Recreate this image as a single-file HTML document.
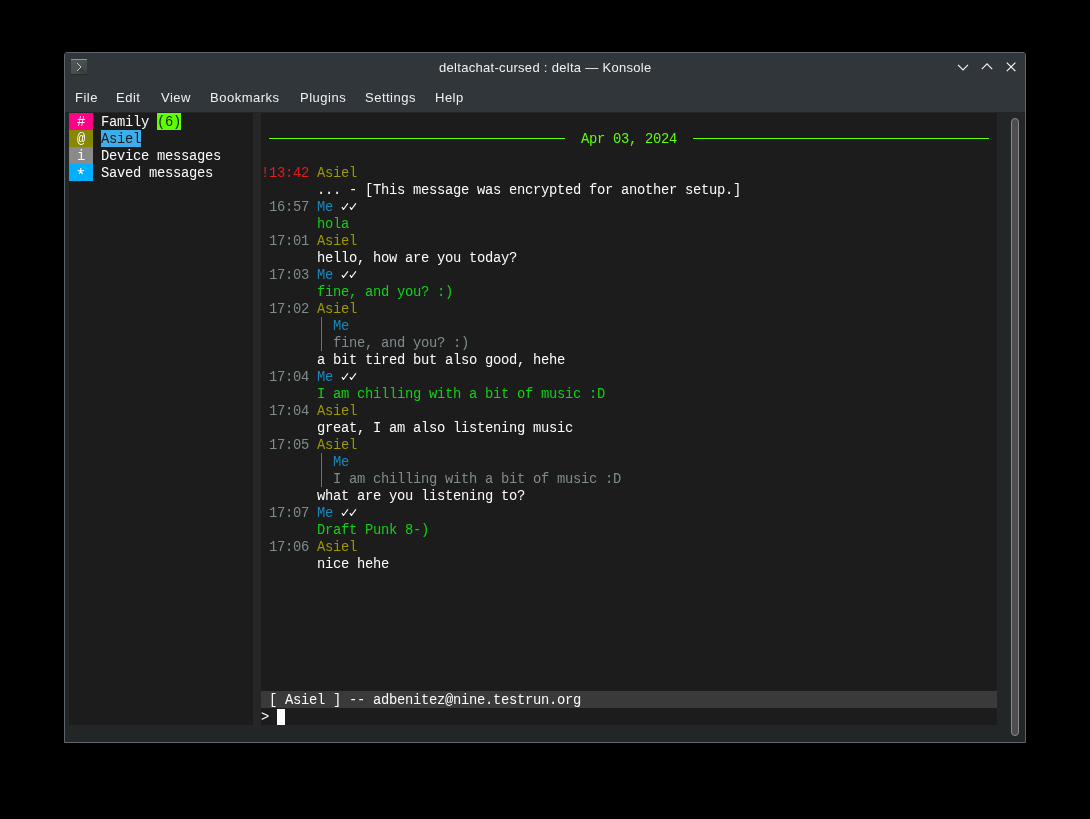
<!DOCTYPE html>
<html><head><meta charset="utf-8"><style>
html,body{-webkit-font-smoothing:antialiased;margin:0;padding:0;background:#000;width:1090px;height:819px;overflow:hidden;position:relative;}
.win{position:absolute;left:64px;top:52px;width:960px;height:689px;border:1px solid #5c646d;border-radius:3px 3px 0 0;background:#232627;overflow:hidden;}
.bar{position:absolute;left:65px;top:53px;width:960px;height:59px;background:#31363b;}
.sans{font-family:"Liberation Sans",sans-serif;font-size:13px;color:#eff0f1;position:absolute;white-space:pre;line-height:16px;}
.t{position:absolute;font-family:"Liberation Mono",monospace;font-size:13.8px;letter-spacing:-0.2812px;line-height:17px;height:16px;padding-top:1px;white-space:pre;}
.ck,.bx{position:absolute;}
.root{position:absolute;left:0;top:0;width:1090px;height:819px;will-change:transform;}
.cells{position:absolute;left:69px;top:113px;width:928px;height:612px;background:#1c1c1c;}
</style></head><body><div class="root">
<div class="win"></div>
<div class="bar"></div>
<div class="cells"></div>
<div class="bx" style="left:253px;top:113px;width:8px;height:612px;background:#262626"></div>
<div class="bx" style="left:261px;top:691px;width:736px;height:17px;background:#3a3a3a"></div>
<div class="bx" style="left:277px;top:709px;width:8px;height:16px;background:#fcfcfc"></div>
<div class="sans" style="left:439px;top:60px;letter-spacing:0.3px">deltachat-cursed : delta — Konsole</div>
<div class="sans" style="left:75px;top:90px;letter-spacing:0.5px">File</div>
<div class="sans" style="left:116px;top:90px;letter-spacing:0.5px">Edit</div>
<div class="sans" style="left:161px;top:90px;letter-spacing:0.5px">View</div>
<div class="sans" style="left:210px;top:90px;letter-spacing:0.5px">Bookmarks</div>
<div class="sans" style="left:300px;top:90px;letter-spacing:0.5px">Plugins</div>
<div class="sans" style="left:365px;top:90px;letter-spacing:0.5px">Settings</div>
<div class="sans" style="left:435px;top:90px;letter-spacing:0.5px">Help</div>
<svg class="bx" style="left:71px;top:59px" width="16" height="16" viewBox="0 0 16 16">
<defs><linearGradient id="ig" x1="0" y1="0" x2="1" y2="1"><stop offset="0" stop-color="#525b5a"/><stop offset="1" stop-color="#3c4343"/></linearGradient></defs>
<rect x="0" y="0" width="16" height="16" fill="url(#ig)"/>
<path d="M10 8 L16 14 L16 16 L14 16 L6 12 Z" fill="#343a3a" opacity="0.7"/>
<rect x="0" y="0" width="16" height="1" fill="#8e9696"/>
<rect x="0" y="15" width="16" height="1" fill="#262a2a"/>
<path d="M6 4 L10 8 L6 12" fill="none" stroke="#c8cccc" stroke-width="1"/>
</svg>
<svg class="bx" style="left:950px;top:55px" width="75" height="25" viewBox="0 0 75 25">
<path d="M8 9.8 L13 14.8 L18 9.8" fill="none" stroke="#f4f4f4" stroke-width="1.2"/>
<path d="M31.8 14.1 L37 8.9 L42.2 14.1" fill="none" stroke="#f4f4f4" stroke-width="1.2"/>
<path d="M56.8 7.6 L65.4 16.2 M65.4 7.6 L56.8 16.2" fill="none" stroke="#f4f4f4" stroke-width="1.2"/>
</svg>
<div class="bx" style="left:1011px;top:118px;width:8px;height:618px;border-radius:4px;background:#4d4d4f;box-sizing:border-box;border:1px solid #8a8a8a"></div>
<div class="t" style="left:69px;top:113px;color:#fcfcfc;background:#ff0087;width:24px;"> # </div>
<div class="t" style="left:101px;top:113px;color:#fcfcfc;">Family </div>
<div class="t" style="left:157px;top:113px;color:#1c1c1c;background:#5fff00;width:24px;">(6)</div>
<div class="t" style="left:69px;top:130px;color:#fcfcfc;background:#878700;width:24px;"> @ </div>
<div class="t" style="left:101px;top:130px;color:#1c1c1c;background:#3daee9;width:40px;">Asiel</div>
<div class="t" style="left:69px;top:147px;color:#fcfcfc;background:#8a8a8a;width:24px;"> i </div>
<div class="t" style="left:101px;top:147px;color:#fcfcfc;">Device messages</div>
<div class="t" style="left:69px;top:164px;color:#fcfcfc;background:#00afff;width:24px;">   </div>
<div class="t" style="left:101px;top:164px;color:#fcfcfc;">Saved messages</div>
<div class="t" style="left:581px;top:130px;color:#5fff00;">Apr 03, 2024</div>
<div class="t" style="left:261px;top:164px;color:#e31c1c;">!13:42</div>
<div class="t" style="left:317px;top:164px;color:#9d9700;">Asiel</div>
<div class="t" style="left:317px;top:181px;color:#fcfcfc;">... - [This message was encrypted for another setup.]</div>
<div class="t" style="left:269px;top:198px;color:#7f8c8d;">16:57</div>
<div class="t" style="left:317px;top:198px;color:#1889bb;">Me</div>
<div class="t" style="left:317px;top:215px;color:#11d116;">hola</div>
<div class="t" style="left:269px;top:232px;color:#7f8c8d;">17:01</div>
<div class="t" style="left:317px;top:232px;color:#9d9700;">Asiel</div>
<div class="t" style="left:317px;top:249px;color:#fcfcfc;">hello, how are you today?</div>
<div class="t" style="left:269px;top:266px;color:#7f8c8d;">17:03</div>
<div class="t" style="left:317px;top:266px;color:#1889bb;">Me</div>
<div class="t" style="left:317px;top:283px;color:#11d116;">fine, and you? :)</div>
<div class="t" style="left:269px;top:300px;color:#7f8c8d;">17:02</div>
<div class="t" style="left:317px;top:300px;color:#9d9700;">Asiel</div>
<div class="t" style="left:333px;top:317px;color:#1889bb;">Me</div>
<div class="t" style="left:333px;top:334px;color:#7f8c8d;">fine, and you? :)</div>
<div class="t" style="left:317px;top:351px;color:#fcfcfc;">a bit tired but also good, hehe</div>
<div class="t" style="left:269px;top:368px;color:#7f8c8d;">17:04</div>
<div class="t" style="left:317px;top:368px;color:#1889bb;">Me</div>
<div class="t" style="left:317px;top:385px;color:#11d116;">I am chilling with a bit of music :D</div>
<div class="t" style="left:269px;top:402px;color:#7f8c8d;">17:04</div>
<div class="t" style="left:317px;top:402px;color:#9d9700;">Asiel</div>
<div class="t" style="left:317px;top:419px;color:#fcfcfc;">great, I am also listening music</div>
<div class="t" style="left:269px;top:436px;color:#7f8c8d;">17:05</div>
<div class="t" style="left:317px;top:436px;color:#9d9700;">Asiel</div>
<div class="t" style="left:333px;top:453px;color:#1889bb;">Me</div>
<div class="t" style="left:333px;top:470px;color:#7f8c8d;">I am chilling with a bit of music :D</div>
<div class="t" style="left:317px;top:487px;color:#fcfcfc;">what are you listening to?</div>
<div class="t" style="left:269px;top:504px;color:#7f8c8d;">17:07</div>
<div class="t" style="left:317px;top:504px;color:#1889bb;">Me</div>
<div class="t" style="left:317px;top:521px;color:#11d116;">Draft Punk 8-)</div>
<div class="t" style="left:269px;top:538px;color:#7f8c8d;">17:06</div>
<div class="t" style="left:317px;top:538px;color:#9d9700;">Asiel</div>
<div class="t" style="left:317px;top:555px;color:#fcfcfc;">nice hehe</div>
<div class="t" style="left:269px;top:691px;color:#fcfcfc;">[ Asiel ] -- adbenitez@nine.testrun.org</div>
<div class="t" style="left:261px;top:708px;color:#fcfcfc;">&gt;</div>
<svg class="ck" style="left:341px;top:198px" width="8" height="17" viewBox="0 0 8 17"><path d="M1.2 9.4 L2.4 11.5 L6.7 5.6" fill="none" stroke="#fcfcfc" stroke-width="1.15" stroke-linecap="round" stroke-linejoin="round"/></svg>
<svg class="ck" style="left:349px;top:198px" width="8" height="17" viewBox="0 0 8 17"><path d="M1.2 9.4 L2.4 11.5 L6.7 5.6" fill="none" stroke="#fcfcfc" stroke-width="1.15" stroke-linecap="round" stroke-linejoin="round"/></svg>
<svg class="ck" style="left:341px;top:266px" width="8" height="17" viewBox="0 0 8 17"><path d="M1.2 9.4 L2.4 11.5 L6.7 5.6" fill="none" stroke="#fcfcfc" stroke-width="1.15" stroke-linecap="round" stroke-linejoin="round"/></svg>
<svg class="ck" style="left:349px;top:266px" width="8" height="17" viewBox="0 0 8 17"><path d="M1.2 9.4 L2.4 11.5 L6.7 5.6" fill="none" stroke="#fcfcfc" stroke-width="1.15" stroke-linecap="round" stroke-linejoin="round"/></svg>
<svg class="ck" style="left:341px;top:368px" width="8" height="17" viewBox="0 0 8 17"><path d="M1.2 9.4 L2.4 11.5 L6.7 5.6" fill="none" stroke="#fcfcfc" stroke-width="1.15" stroke-linecap="round" stroke-linejoin="round"/></svg>
<svg class="ck" style="left:349px;top:368px" width="8" height="17" viewBox="0 0 8 17"><path d="M1.2 9.4 L2.4 11.5 L6.7 5.6" fill="none" stroke="#fcfcfc" stroke-width="1.15" stroke-linecap="round" stroke-linejoin="round"/></svg>
<svg class="ck" style="left:341px;top:504px" width="8" height="17" viewBox="0 0 8 17"><path d="M1.2 9.4 L2.4 11.5 L6.7 5.6" fill="none" stroke="#fcfcfc" stroke-width="1.15" stroke-linecap="round" stroke-linejoin="round"/></svg>
<svg class="ck" style="left:349px;top:504px" width="8" height="17" viewBox="0 0 8 17"><path d="M1.2 9.4 L2.4 11.5 L6.7 5.6" fill="none" stroke="#fcfcfc" stroke-width="1.15" stroke-linecap="round" stroke-linejoin="round"/></svg>
<div class="bx" style="left:321px;top:317px;width:1px;height:17px;background:#1889bb"></div>
<div class="bx" style="left:321px;top:334px;width:1px;height:17px;background:#1889bb"></div>
<div class="bx" style="left:321px;top:453px;width:1px;height:17px;background:#1889bb"></div>
<div class="bx" style="left:321px;top:470px;width:1px;height:17px;background:#1889bb"></div>
<div class="bx" style="left:269px;top:138px;width:296px;height:1px;background:#5fff00"></div>
<div class="bx" style="left:693px;top:138px;width:296px;height:1px;background:#5fff00"></div>
<svg class="bx" style="left:77px;top:164px" width="8" height="17" viewBox="0 0 8 17"><path d="M3.8 7.3 L3.8 4.4 M3.8 7.3 L1.1 6.5 M3.8 7.3 L6.6 6.5 M3.8 7.3 L2.3 9.6 M3.8 7.3 L5.4 9.6" fill="none" stroke="#fcfcfc" stroke-width="1.15" stroke-linecap="round"/></svg>
</div></body></html>
